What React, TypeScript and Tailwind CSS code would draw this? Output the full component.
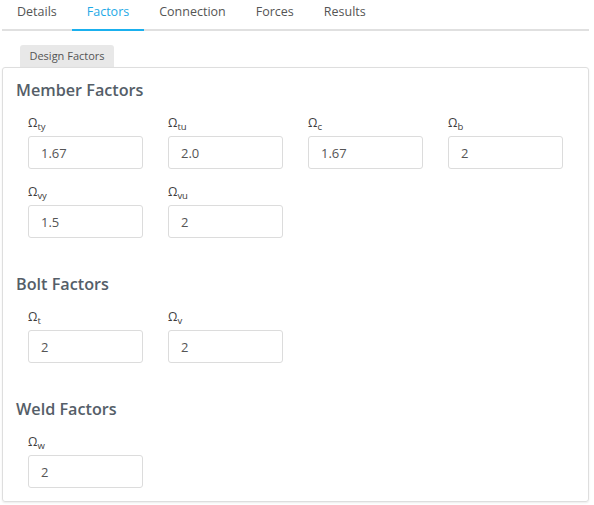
import React from "react";

const font = { fontFamily: '"Open Sans", "Noto Sans", sans-serif' };

type F = { sub: string; value: string };

function Field({ f }: { f: F }) {
  return (
    <div className="flex flex-col">
      <div className="h-[16px] leading-[16px] text-[12px] text-[#3d3d3d] mb-[5px] whitespace-nowrap">
        Ω<span className="text-[9.5px] relative top-[3px]">{f.sub}</span>
      </div>
      <input
        readOnly
        value={f.value}
        className="h-[33px] w-[115px] border border-[#dcdcdc] rounded-[3px] px-[12px] text-[13px] text-[#555] bg-white outline-none"
        style={font}
      />
    </div>
  );
}

function Section({ title, fields, first }: { title: string; fields: F[]; first?: boolean }) {
  return (
    <div className={first ? "" : "mt-[34px]"}>
      <h2 className="h-[24px] leading-[24px] text-[16.2px] font-semibold text-[#555e68] pl-[13px]">{title}</h2>
      <div className="mt-[13px] pl-[25px] grid grid-cols-[repeat(4,115px)] gap-x-[25px] gap-y-[15px]">
        {fields.map((f, i) => (
          <Field key={i} f={f} />
        ))}
      </div>
    </div>
  );
}

export default function App() {
  const tabs = ["Details", "Factors", "Connection", "Forces", "Results"];
  return (
    <div className="w-[594px] h-[505px] bg-white overflow-hidden" style={font}>
      <div className="mx-[2px] w-[587px] h-[31px] border-b-2 border-[#e0e0e0] flex">
        {tabs.map((t) => (
          <div
            key={t}
            className={
              "px-[15px] h-[31px] leading-[24px] text-[12.5px] -mb-[2px] " +
              (t === "Factors"
                ? "text-[#1ea9e6] border-b-2 border-[#1ab0ee]"
                : "text-[#555]")
            }
          >
            {t}
          </div>
        ))}
      </div>
      <div className="ml-[20px] mt-[14px] w-[94px] h-[22px] bg-[#e8e8e8] rounded-t-[3px] text-[11px] leading-[22px] text-[#555] text-center">
        Design Factors
      </div>
      <div className="ml-[2px] w-[587px] border border-[#dedede] rounded-[3px] shadow-[0_1px_2px_rgba(0,0,0,0.08)] pt-[10px] pb-[13px]">
        <Section
          first
          title="Member Factors"
          fields={[
            { sub: "ty", value: "1.67" },
            { sub: "tu", value: "2.0" },
            { sub: "c", value: "1.67" },
            { sub: "b", value: "2" },
            { sub: "vy", value: "1.5" },
            { sub: "vu", value: "2" },
          ]}
        />
        <Section
          title="Bolt Factors"
          fields={[
            { sub: "t", value: "2" },
            { sub: "v", value: "2" },
          ]}
        />
        <Section title="Weld Factors" fields={[{ sub: "w", value: "2" }]} />
      </div>
    </div>
  );
}
